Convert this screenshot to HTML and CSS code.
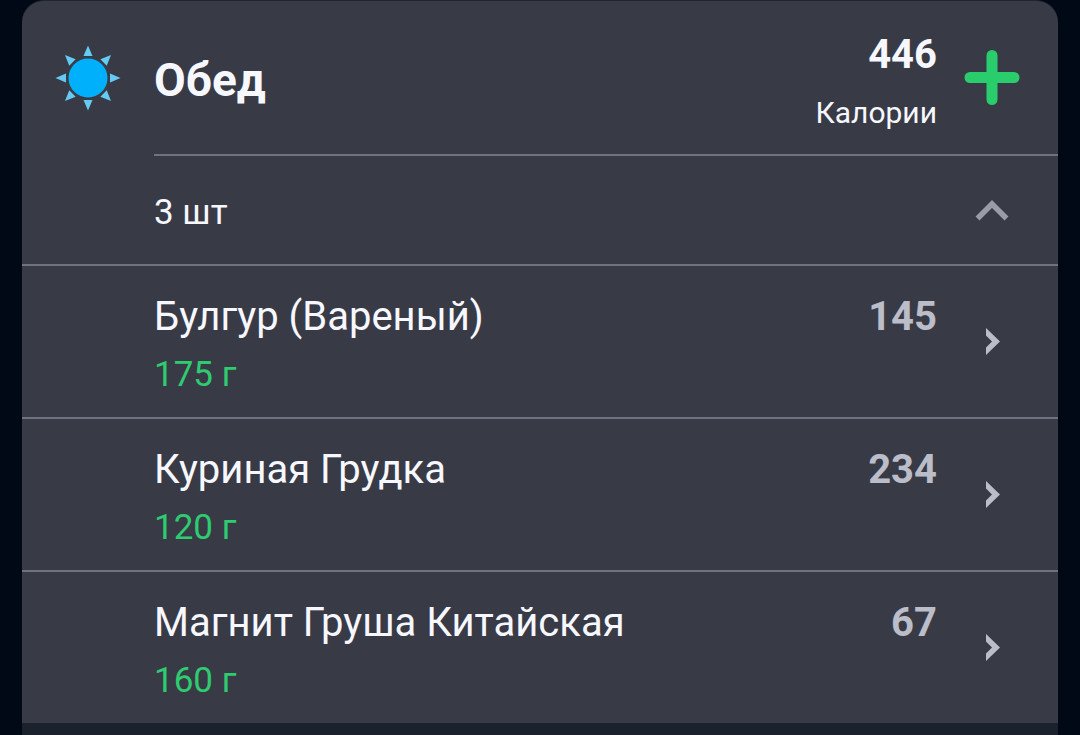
FILE: index.html
```html
<!DOCTYPE html>
<html lang="ru">
<head>
    <meta charset="UTF-8">
    <meta name="viewport" content="width=device-width, initial-scale=1.0">
    <title>Обед</title>
    <link rel="stylesheet" href="styles.css">
</head>
<body>
    <main class="page">
        <section class="meal">
            <!-- Заголовок приёма пищи -->
            <header class="meal-header">
                <div class="meal-icon">
                    <svg width="66" height="66" viewBox="-33 -32 66 66" aria-hidden="true">
                        <circle r="19.500" fill="#00b0fa"/>
                        <g fill="#66cbf3">
                            <path id="ray" d="M0 -32.500L4.500 -22H-4.500Z"/>
                            <use href="#ray" transform="rotate(45)"/>
                            <use href="#ray" transform="rotate(90)"/>
                            <use href="#ray" transform="rotate(135)"/>
                            <use href="#ray" transform="rotate(180)"/>
                            <use href="#ray" transform="rotate(225)"/>
                            <use href="#ray" transform="rotate(270)"/>
                            <use href="#ray" transform="rotate(315)"/>
                        </g>
                    </svg>
                </div>
                <div class="meal-summary">
                    <h1 class="meal-title">Обед</h1>
                    <div class="meal-total">
                        <div class="kcal">446</div>
                        <div class="kcal-label">Калории</div>
                    </div>
                    <button class="icon-button" type="button" aria-label="Добавить">
                        <svg width="56" height="56" viewBox="0 0 56 56">
                            <path d="M28 5.500V49.500M6 27.500H50" stroke="#29cd6c" stroke-width="11" stroke-linecap="round"/>
                        </svg>
                    </button>
                </div>
            </header>

            <div class="meal-count">
                <span class="count">3 шт</span>
                <button class="icon-button" type="button" aria-label="Свернуть" aria-expanded="true">
                    <svg width="36" height="24" viewBox="0 0 36 24">
                        <path d="M3.500 20.500L18 6L32.500 20.500" fill="none" stroke="#9a9ba7" stroke-width="5.500"/>
                    </svg>
                </button>
            </div>

            <!-- Список продуктов -->
            <ul class="foods">
                <li>
                    <a class="food" href="#">
                        <span class="food-info">
                            <span class="food-name">Булгур (Вареный)</span>
                            <span class="food-amount">175 г</span>
                        </span>
                        <span class="kcal">145</span>
                        <span class="food-arrow">
                            <svg width="16" height="28" viewBox="0 0 16 28" aria-hidden="true">
                                <path d="M2 0L16 13.500L2 27V19.500L8 13.500L2 7.500Z" fill="#bbbdc8"/>
                            </svg>
                        </span>
                    </a>
                </li>
                <li>
                    <a class="food" href="#">
                        <span class="food-info">
                            <span class="food-name">Куриная Грудка</span>
                            <span class="food-amount">120 г</span>
                        </span>
                        <span class="kcal">234</span>
                        <span class="food-arrow">
                            <svg width="16" height="28" viewBox="0 0 16 28" aria-hidden="true">
                                <path d="M2 0L16 13.500L2 27V19.500L8 13.500L2 7.500Z" fill="#bbbdc8"/>
                            </svg>
                        </span>
                    </a>
                </li>
                <li>
                    <a class="food" href="#">
                        <span class="food-info">
                            <span class="food-name">Магнит Груша Китайская</span>
                            <span class="food-amount">160 г</span>
                        </span>
                        <span class="kcal">67</span>
                        <span class="food-arrow">
                            <svg width="16" height="28" viewBox="0 0 16 28" aria-hidden="true">
                                <path d="M2 0L16 13.500L2 27V19.500L8 13.500L2 7.500Z" fill="#bbbdc8"/>
                            </svg>
                        </span>
                    </a>
                </li>
            </ul>
            <div class="meal-footer"></div>
        </section>
    </main>
</body>
</html>
```

FILE: styles.css
```css
* {
    box-sizing: border-box;
}
body {
    margin: 0;
    background-color: #020916;
    color: #f7f7ff;
    font-family: Roboto, sans-serif;
}
.page {
    padding: 0 22px;
}
.meal {
    background-color: #383b46;
    border-top: 1px solid #1f2430;
    border-radius: 22px 22px 0 0;
    overflow: hidden;
}

/* Заголовок */
.meal-header {
    display: flex;
}
.meal-icon {
    display: flex;
    align-items: center;
    justify-content: center;
    width: 132px;
}
.meal-summary {
    display: flex;
    flex: 1;
    align-items: center;
    padding-right: 11px;
    border-bottom: 2px solid #6f727e;
}
.meal-title {
    flex: 1;
    margin: 0;
    padding-top: 5px;
    font-size: 46px;
    line-height: 56px;
}
.meal-total {
    padding: 26px 0 11px;
    text-align: right;
}
.kcal {
    font-size: 40px;
    font-weight: bold;
    line-height: 56px;
}
.kcal-label {
    font-size: 30px;
    line-height: 60px;
}
.icon-button {
    display: flex;
    align-items: center;
    justify-content: center;
    width: 110px;
    height: 108px;
    padding: 0;
    border: none;
    background: none;
    cursor: pointer;
}

/* Количество */
.meal-count {
    display: flex;
    align-items: center;
    padding: 0 11px 0 132px;
    border-bottom: 2px solid #6f727e;
}
.count {
    flex: 1;
    padding-top: 5px;
    font-size: 35px;
    line-height: 56px;
}

/* Продукты */
.foods {
    margin: 0;
    padding: 0;
    list-style: none;
}
.foods li + li {
    border-top: 2px solid #6f727e;
}
.food {
    display: flex;
    padding: 23px 11px 12px 132px;
    color: inherit;
    text-decoration: none;
}
.food-info {
    flex: 1;
}
.food-name,
.food-amount {
    display: block;
}
.food-name {
    font-size: 40px;
    line-height: 56px;
}
.food-amount {
    color: #2fcb70;
    font-size: 35px;
    line-height: 60px;
}
.food .kcal {
    color: #bbbdc8;
}
.food-arrow {
    display: flex;
    justify-content: center;
    width: 110px;
    padding-top: 39px;
}
.meal-footer {
    height: 12px;
    background-color: #1b212d;
}
```
